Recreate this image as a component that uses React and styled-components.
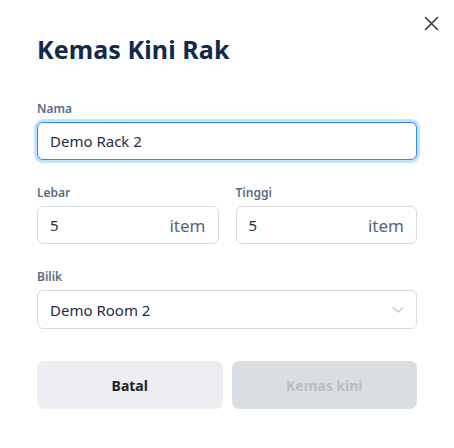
import React from 'react'
import styled, { createGlobalStyle } from 'styled-components'

const GlobalStyle = createGlobalStyle`
  html, body {
    margin: 0;
    padding: 0;
    background: #ffffff;
  }
  * {
    box-sizing: border-box;
  }
`

// Modal
const Modal = styled.div`
  position: relative;
  width: 454px;
  height: 448px;
  background: #ffffff;
  padding: 34px 37px 0 37px;
  font-family: "Noto Sans", "Open Sans", sans-serif;
`

const CloseButton = styled.button`
  position: absolute;
  top: 14px;
  right: 14px;
  width: 18px;
  height: 18px;
  padding: 0;
  border: none;
  background: none;
  display: flex;
  align-items: center;
  justify-content: center;
  cursor: pointer;
`

const Title = styled.h2`
  margin: 0 0 37px 0;
  font-size: 25px;
  line-height: 30px;
  font-weight: 700;
  color: #102a4c;
  letter-spacing: 0.1px;
`

const Form = styled.div`
  display: flex;
  flex-direction: column;
  gap: 25px;
`

const Field = styled.div`
  display: flex;
  flex-direction: column;
  gap: 6px;
`

const Label = styled.label`
  font-size: 12px;
  line-height: 15px;
  font-weight: 600;
  color: #5b6b84;
`

const Row = styled.div`
  display: grid;
  grid-template-columns: 1fr 1fr;
  gap: 17px;
`

const InputBox = styled.div`
  display: flex;
  align-items: center;
  height: ${p => (p.tall ? '39px' : '38px')};
  padding: 0 12px 0 12px;
  border: 1px solid ${p => (p.focused ? '#2f8cf0' : '#d7dbe0')};
  border-radius: 6px;
  background: #ffffff;
  box-shadow: ${p => (p.focused ? '0 0 0 3px #c4e1fd' : 'none')};
`

const Value = styled.span`
  flex: 1;
  font-size: 15px;
  color: #1f2d45;
`

const Suffix = styled.span`
  font-size: 17px;
  color: #56657d;
`

// Buttons
const Actions = styled.div`
  display: grid;
  grid-template-columns: 1fr 1fr;
  gap: 9px;
  margin-top: 32px;
`

const Button = styled.button`
  height: 48px;
  border: none;
  border-radius: 7px;
  font-family: inherit;
  font-size: 14px;
  font-weight: 700;
  background: ${p => (p.disabled ? '#d9dee3' : '#eceef1')};
  color: ${p => (p.disabled ? '#b9bdc3' : '#1d1f2b')};
`

function CloseIcon () {
  return (
    <svg width='15' height='15' viewBox='0 0 15 15'>
      <path d='M1.5 1.5 L13.5 13.5 M13.5 1.5 L1.5 13.5' stroke='#3a3a3a' strokeWidth='1.6' strokeLinecap='round' />
    </svg>
  )
}

function Chevron () {
  return (
    <svg width='12' height='8' viewBox='0 0 12 8'>
      <path d='M1 1.5 L6 6 L11 1.5' fill='none' stroke='#c3c7cd' strokeWidth='1.3' strokeLinecap='round' strokeLinejoin='round' />
    </svg>
  )
}

function App () {
  return (
    <>
      <GlobalStyle />
      <Modal>
        <CloseButton><CloseIcon /></CloseButton>
        <Title>Kemas Kini Rak</Title>

        <Form>
          <Field>
            <Label>Nama</Label>
            <InputBox focused>
              <Value>Demo Rack 2</Value>
            </InputBox>
          </Field>

          <Row>
            <Field>
              <Label>Lebar</Label>
              <InputBox>
                <Value>5</Value>
                <Suffix>item</Suffix>
              </InputBox>
            </Field>
            <Field>
              <Label>Tinggi</Label>
              <InputBox>
                <Value>5</Value>
                <Suffix>item</Suffix>
              </InputBox>
            </Field>
          </Row>

          <Field>
            <Label>Bilik</Label>
            <InputBox tall>
              <Value>Demo Room 2</Value>
              <Chevron />
            </InputBox>
          </Field>
        </Form>

        <Actions>
          <Button>Batal</Button>
          <Button disabled>Kemas kini</Button>
        </Actions>
      </Modal>
    </>
  )
}

export default App
